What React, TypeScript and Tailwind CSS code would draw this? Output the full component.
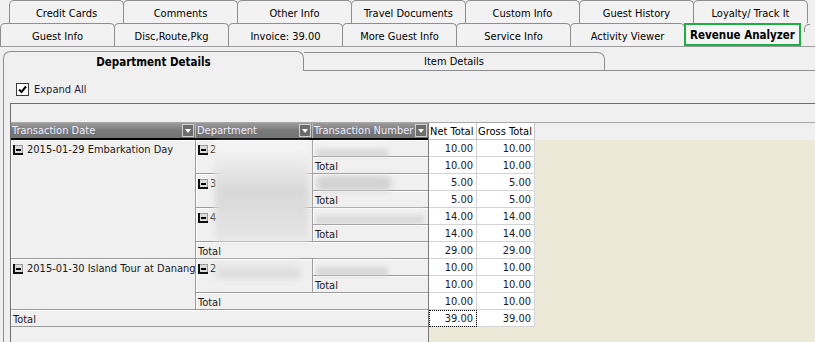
import React from 'react';

const topTabs = ['Credit Cards', 'Comments', 'Other Info', 'Travel Documents', 'Custom Info', 'Guest History', 'Loyalty/ Track It'];
const midTabs = ['Guest Info', 'Disc,Route,Pkg', 'Invoice: 39.00', 'More Guest Info', 'Service Info', 'Activity Viewer'];

const totals: [string, string][] = [
  ['10.00', '10.00'],
  ['10.00', '10.00'],
  ['5.00', '5.00'],
  ['5.00', '5.00'],
  ['14.00', '14.00'],
  ['14.00', '14.00'],
  ['29.00', '29.00'],
  ['10.00', '10.00'],
  ['10.00', '10.00'],
  ['10.00', '10.00'],
  ['39.00', '39.00'],
];

const Tab = ({ label }: { label: string }) => (
  <div className="-ml-px flex h-[23px] w-[115px] shrink-0 items-center justify-center rounded-t-[5px] border border-b-0 border-[#8e8e8e] bg-[#f2f2f2] pt-[4px]">
    {label}
  </div>
);

const Minus = () => (
  <svg width="10" height="10" viewBox="0 0 10 10" className="shrink-0">
    <rect x="0" y="0" width="10" height="10" fill="#dcdcdc" />
    <rect x="0" y="0" width="10" height="1" fill="#9a9a9a" />
    <rect x="9" y="0" width="1" height="10" fill="#9a9a9a" />
    <rect x="0" y="0" width="2" height="10" fill="#111" />
    <rect x="0" y="8" width="10" height="2" fill="#111" />
    <rect x="3" y="4" width="5" height="2" fill="#000" />
  </svg>
);

const DropBtn = () => (
  <svg width="12" height="13" viewBox="0 0 12 13" className="shrink-0">
    <rect x="0.5" y="0.5" width="11" height="12" fill="#6c6c6c" stroke="#cfcfcf" />
    <path d="M3 5 L9 5 L6 9 Z" fill="#ffffff" />
  </svg>
);

const Cell = ({ className, children }: { className: string; children?: React.ReactNode }) => (
  <div className={`overflow-hidden whitespace-nowrap border-r border-b border-[#9a9a9a] px-[2px] pt-px leading-[17px] shadow-[inset_1px_1px_0_#ffffff] ${className}`}>
    {children}
  </div>
);

export default function App() {
  return (
    <div className="h-[342px] w-[815px] overflow-hidden bg-[#f0f0f0] font-['DejaVu_Sans_Condensed','Liberation_Sans',Arial,sans-serif] text-[11px] text-black">
      {/* outer tab rows */}
      <div className="flex h-[23px] pl-[10px]">
        {topTabs.map((t) => (
          <Tab key={t} label={t} />
        ))}
      </div>
      <div className="flex h-[23px] pl-px">
        {midTabs.map((t) => (
          <Tab key={t} label={t} />
        ))}
        <div className="-ml-px flex h-[23px] w-[117px] shrink-0 items-center justify-center border-2 border-[#1fae45] bg-[#f4f4f4] pt-[2px] text-[11.5px] font-bold">
          Revenue Analyzer
        </div>
        <div className="ml-[3px] mt-[1px] h-[8px] w-[6px] rounded-tl-[5px] border-l border-t border-[#8e8e8e]" />
      </div>

      {/* panel */}
      <div className="border-t border-[#9c9c9c] pt-[4px]">
        <div className="flex h-[20px]">
          <div className="ml-[3px] flex h-[20px] w-[301px] items-center justify-center rounded-t-[7px] border-l border-r border-t border-[#8e8e8e] pt-[3px] text-[11.5px] font-bold">
            Department Details
          </div>
          <div className="mt-px flex h-[19px] w-[301px] items-center justify-center rounded-tr-[7px] border-r border-t border-b border-[#8e8e8e] pt-[2px]">
            Item Details
          </div>
          <div className="flex-1 border-b border-[#8e8e8e]" />
        </div>

        <div className="ml-[3px] h-[272px] border-l border-[#8e8e8e] pl-[6px] pt-[12px]">
          <div className="ml-[6px] flex h-[13px] items-center gap-[5px]">
            <svg width="13" height="13" viewBox="0 0 13 13">
              <rect x="0.5" y="0.5" width="12" height="12" fill="#fff" stroke="#3a3a3a" />
              <path d="M3 6.5 L5.5 9 L10 3.5" fill="none" stroke="#000" strokeWidth="2" />
            </svg>
            <span className="pt-[2px] text-[#1c1c3c]">Expand All</span>
          </div>

          {/* pivot grid */}
          <div className="mt-[7px] h-[240px] border-l border-t border-[#6e6e6e]">
            <div className="h-[19px] border-b border-[#a8a8a8]" />
            <div className="flex h-[219px]">
              {/* left row headers */}
              <div className="flex w-[418px] flex-col border-r border-[#7a7a7a]">
                <div className="flex h-[17px] border-b-2 border-black bg-gradient-to-b from-[#9c9c9c] via-[#7a7a7a] to-[#727272] text-[#ececff]">
                  <div className="flex w-[185px] items-center justify-between border-r border-[#b8b8b8] pl-px pr-px">
                    <span className="pt-[2px]">Transaction Date</span>
                    <DropBtn />
                  </div>
                  <div className="flex w-[117px] items-center justify-between border-r border-[#b8b8b8] pl-px pr-px">
                    <span className="pt-[2px]">Department</span>
                    <DropBtn />
                  </div>
                  <div className="flex w-[115px] items-center justify-between pl-px pr-px">
                    <span className="pt-[2px]">Transaction Number</span>
                    <DropBtn />
                  </div>
                </div>

                <div className="relative grid grid-cols-[185px_117px_115px] grid-rows-[repeat(11,17px)] text-[#1a1a1a]">
                  <Cell className="col-start-1 row-start-1 row-span-7">
                    <div className="flex items-center gap-[4px]"><Minus /><span>2015-01-29 Embarkation Day</span></div>
                  </Cell>
                  <Cell className="col-start-2 row-start-1 row-span-2">
                    <div className="flex items-center gap-[2px]"><Minus /><span>2</span></div>
                  </Cell>
                  <Cell className="col-start-3 row-start-1 border-r-0" />
                  <Cell className="col-start-3 row-start-2 border-r-0">Total</Cell>
                  <Cell className="col-start-2 row-start-3 row-span-2">
                    <div className="flex items-center gap-[2px]"><Minus /><span>3</span></div>
                  </Cell>
                  <Cell className="col-start-3 row-start-3 border-r-0" />
                  <Cell className="col-start-3 row-start-4 border-r-0">Total</Cell>
                  <Cell className="col-start-2 row-start-5 row-span-2">
                    <div className="flex items-center gap-[2px]"><Minus /><span>4</span></div>
                  </Cell>
                  <Cell className="col-start-3 row-start-5 border-r-0" />
                  <Cell className="col-start-3 row-start-6 border-r-0">Total</Cell>
                  <Cell className="col-start-2 col-span-2 row-start-7 border-r-0">Total</Cell>

                  <Cell className="col-start-1 row-start-8 row-span-3">
                    <div className="flex items-center gap-[4px]"><Minus /><span>2015-01-30 Island Tour at Danang</span></div>
                  </Cell>
                  <Cell className="col-start-2 row-start-8 row-span-2">
                    <div className="flex items-center gap-[2px]"><Minus /><span>2</span></div>
                  </Cell>
                  <Cell className="col-start-3 row-start-8 border-r-0" />
                  <Cell className="col-start-3 row-start-9 border-r-0">Total</Cell>
                  <Cell className="col-start-2 col-span-2 row-start-10 border-r-0">Total</Cell>
                  <Cell className="col-start-1 col-span-3 row-start-11 border-r-0">Total</Cell>

                  {/* masked values */}
                  <div className="absolute left-[204px] top-[3px] h-[98px] w-[94px] bg-gradient-to-b from-[#f8f8f8] via-[#d8d8d8] to-[#e6e6e6] blur-[3px]" />
                  <div className="absolute left-[305px] top-[3px] h-[13px] w-[72px] bg-gradient-to-b from-[#fbfbfb] to-[#cdcdcd] blur-[2px]" />
                  <div className="absolute left-[305px] top-[36px] h-[15px] w-[76px] rounded-full bg-[#d2d2d2] blur-[3px]" />
                  <div className="absolute left-[305px] top-[69px] h-[14px] w-[108px] bg-gradient-to-b from-[#f8f8f8] to-[#cecece] blur-[2px]" />
                  <div className="absolute left-[205px] top-[121px] h-[17px] w-[85px] bg-gradient-to-b from-[#efefef] to-[#d6d6d6] blur-[3px]" />
                  <div className="absolute left-[305px] top-[121px] h-[14px] w-[72px] bg-gradient-to-b from-[#f8f8f8] to-[#cbcbcb] blur-[2px]" />
                </div>
                <div className="flex-1" />
              </div>

              {/* values */}
              <div className="flex flex-1 flex-col">
                <div className="flex h-[17px]">
                  <div className="w-[48px] border-r border-b border-[#c4c4c4] bg-white pl-px pt-[2px] leading-[14px]">Net Total</div>
                  <div className="w-[58px] border-r border-b border-[#c4c4c4] bg-white pl-px pt-[2px] leading-[14px]">Gross Total</div>
                </div>
                <div className="flex-1 bg-[#ece9d8]">
                  <div className="grid w-[106px] grid-cols-[48px_58px] grid-rows-[repeat(11,17px)] text-[#1a1a2a]">
                    {totals.map(([n, g], i) => (
                      <React.Fragment key={i}>
                        <div className={`border-r border-b border-[#d4d4d4] bg-white pr-[3px] pt-px text-right leading-[15px] ${i === totals.length - 1 ? 'outline outline-1 -outline-offset-1 outline-dotted outline-black' : ''}`}>
                          {n}
                        </div>
                        <div className="border-r border-b border-[#d4d4d4] bg-white pr-[3px] pt-px text-right leading-[15px]">{g}</div>
                      </React.Fragment>
                    ))}
                  </div>
                </div>
              </div>
            </div>
          </div>
        </div>
      </div>
    </div>
  );
}
